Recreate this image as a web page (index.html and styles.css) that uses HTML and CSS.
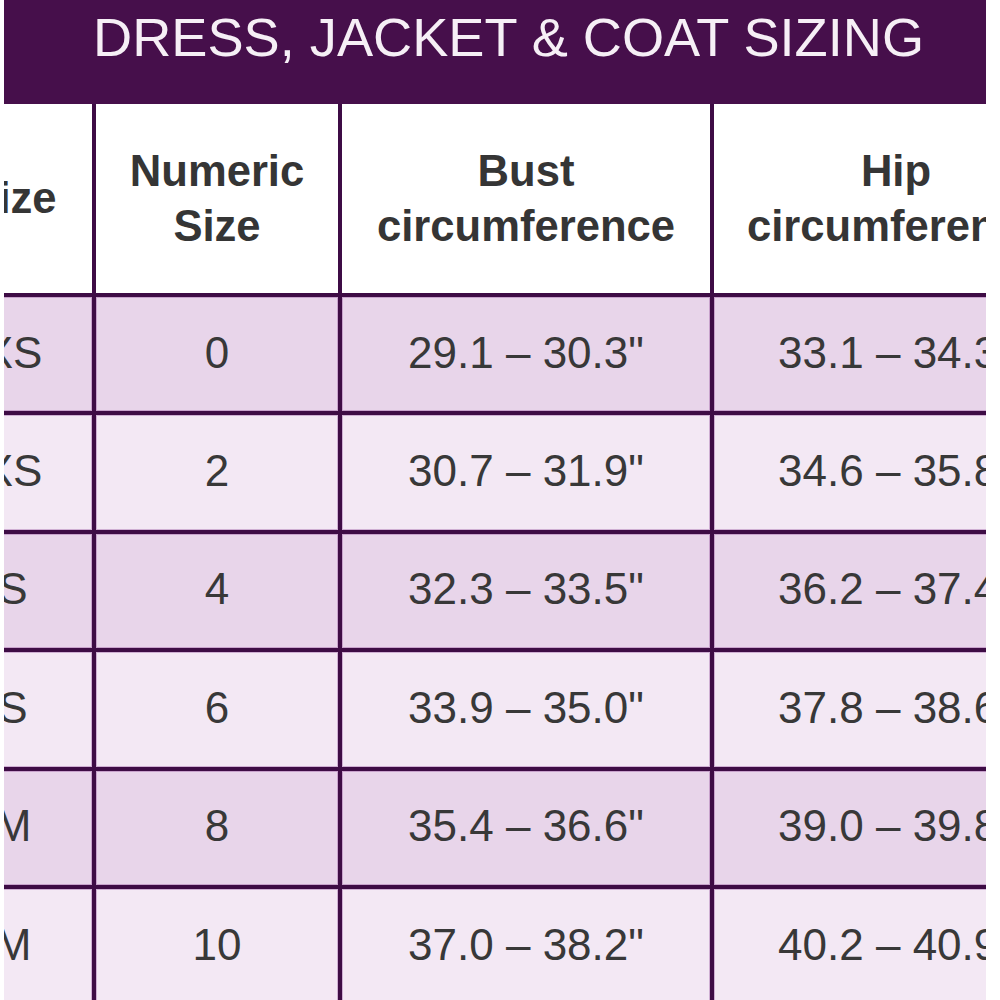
FILE: index.html
```html
<!DOCTYPE html>
<html lang="en">
<head>
<meta charset="utf-8">
<title>Dress, Jacket &amp; Coat Sizing</title>
<link rel="stylesheet" href="styles.css">
</head>
<body>
<div class="viewport">
  <div class="title-bar"><h1 class="title">DRESS, JACKET &amp; COAT SIZING</h1></div>
  <div class="size-grid">
    <div class="cell head">Size</div>
    <div class="cell head">Numeric<br>Size</div>
    <div class="cell head">Bust<br>circumference</div>
    <div class="cell head">Hip<br>circumference</div>

    <div class="cell dark">XS</div>
    <div class="cell dark">0</div>
    <div class="cell dark">29.1 – 30.3"</div>
    <div class="cell dark">33.1 – 34.3"</div>

    <div class="cell light">XS</div>
    <div class="cell light">2</div>
    <div class="cell light">30.7 – 31.9"</div>
    <div class="cell light">34.6 – 35.8"</div>

    <div class="cell dark">S</div>
    <div class="cell dark">4</div>
    <div class="cell dark">32.3 – 33.5"</div>
    <div class="cell dark">36.2 – 37.4"</div>

    <div class="cell light">S</div>
    <div class="cell light">6</div>
    <div class="cell light">33.9 – 35.0"</div>
    <div class="cell light">37.8 – 38.6"</div>

    <div class="cell dark">M</div>
    <div class="cell dark">8</div>
    <div class="cell dark">35.4 – 36.6"</div>
    <div class="cell dark">39.0 – 39.8"</div>

    <div class="cell light">M</div>
    <div class="cell light">10</div>
    <div class="cell light">37.0 – 38.2"</div>
    <div class="cell light">40.2 – 40.9"</div>
  </div>
</div>
</body>
</html>
```

FILE: styles.css
```css
html, body {
  margin: 0;
  padding: 0;
  background: #ffffff;
}

body {
  font-family: "Liberation Sans", Arial, sans-serif;
  height: 1000px;
  overflow: hidden;
}

.viewport {
  margin-left: 4px;
  width: 982px;
  overflow: hidden;
}

.title-bar {
  background: #460f4b;
  height: 104px;
  display: flex;
  align-items: flex-start;
}

.title {
  margin: 0;
  padding: 9px 0 0 89px;
  font-weight: 400;
  font-size: 54.2px;
  line-height: 56px;
  color: #f6eff6;
  white-space: nowrap;
}

.size-grid {
  display: grid;
  grid-template-columns: 158px 242px 368px 364px;
  grid-template-rows: 189px repeat(6, 114.4px);
  gap: 4px;
  background: #3e0c45;
  margin-left: -70px;
  width: max-content;
}

.cell {
  display: flex;
  align-items: center;
  justify-content: center;
  text-align: center;
  white-space: nowrap;
  color: #383838;
  font-size: 44px;
  line-height: 55px;
  padding-bottom: 4px;
  box-shadow: inset 0 0 0 1px rgba(140, 70, 150, 0.35);
}

.head {
  background: #ffffff;
  font-weight: 700;
  font-size: 43.6px;
  color: #353535;
  box-shadow: none;
  padding-bottom: 0;
  padding-top: 0;
}

.dark {
  background: #e8d5ea;
}

.light {
  background: #f3e8f4;
}
```
